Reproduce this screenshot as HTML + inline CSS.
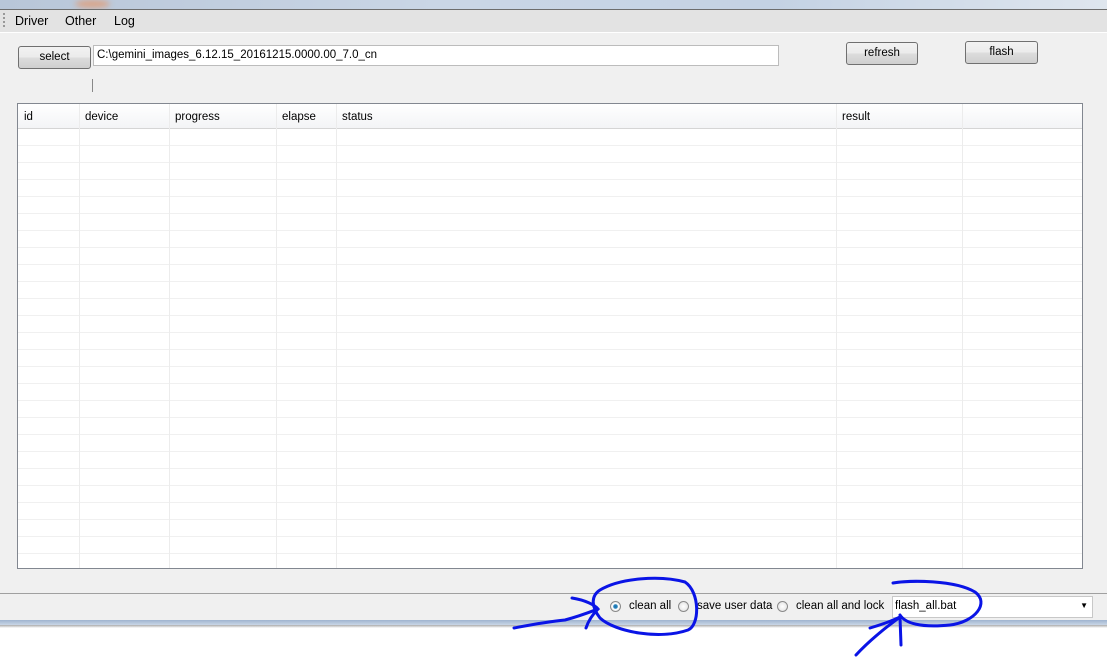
<!DOCTYPE html>
<html><head><style>
body{margin:0;width:1107px;height:658px;overflow:hidden;background:#fff;font-family:"Liberation Sans",sans-serif;font-size:11.5px;color:#000;position:relative}
.a{position:absolute}
.btn{position:absolute;border:1px solid #707070;border-radius:3px;background:linear-gradient(#f2f2f2 0%,#ebebeb 50%,#dddddd 51%,#cfcfcf 100%);text-align:center;line-height:21px;font-size:11.5px;box-sizing:border-box}
.rad{position:absolute;width:11px;height:11px;border-radius:50%;border:1px solid #8a8a8a;background:radial-gradient(#fff,#ddd);box-sizing:border-box}
</style></head><body>
<div class="a" style="left:0;top:0;width:1107px;height:9px;background:linear-gradient(90deg,#b8c6d8,#cad6e6 40%,#c4d2e4 70%,#dfe6ee)"></div>
<div class="a" style="left:75px;top:0;width:35px;height:8px;background:#d9a58a;border-radius:50%;filter:blur(3px)"></div>
<div class="a" style="left:0;top:9px;width:1107px;height:1px;background:#6d6d6d"></div>
<div class="a" style="left:0;top:10px;width:1107px;height:22px;background:#e3e3e3"></div>
<div class="a" style="left:0;top:32px;width:1107px;height:561px;background:#f0f0f0;border-top:1px solid #fff"></div>
<div class="a" style="left:3px;top:13px;width:2px;height:14px;border-left:2px dotted #999"></div>
<div class="a" style="left:15px;top:14px;font-size:12.5px">Driver</div>
<div class="a" style="left:65px;top:14px;font-size:12.5px">Other</div>
<div class="a" style="left:114px;top:14px;font-size:12.5px">Log</div>
<div class="btn" style="left:18px;top:46px;width:73px;height:23px">select</div>
<div class="a" style="left:93px;top:45px;width:686px;height:21px;background:#fff;border:1px solid #bcbcbc;box-sizing:border-box;padding:3px 3px;font-size:11.5px;line-height:13px">C:\gemini_images_6.12.15_20161215.0000.00_7.0_cn</div>
<div class="a" style="left:92px;top:79px;width:1px;height:13px;background:#888"></div>
<div class="btn" style="left:846px;top:42px;width:72px;height:23px">refresh</div>
<div class="btn" style="left:965px;top:41px;width:73px;height:23px">flash</div>
<div class="a" style="left:17px;top:103px;width:1066px;height:466px;background:#fff;border:1px solid #828790;box-sizing:border-box;overflow:hidden">
<div class="a" style="left:0;top:0;width:1064px;height:24px;background:linear-gradient(#fff,#f3f4f6);border-bottom:1px solid #d5d5d5"></div>
<div class="a" style="left:0;top:25px;width:1064px;height:440px;background:repeating-linear-gradient(#fff 0,#fff 16px,#f0f0f0 16px,#f0f0f0 17px)"></div>
<div class="a" style="left:61px;top:0;width:1px;height:465px;background:#ececec"></div>
<div class="a" style="left:151px;top:0;width:1px;height:465px;background:#ececec"></div>
<div class="a" style="left:258px;top:0;width:1px;height:465px;background:#ececec"></div>
<div class="a" style="left:318px;top:0;width:1px;height:465px;background:#ececec"></div>
<div class="a" style="left:818px;top:0;width:1px;height:465px;background:#ececec"></div>
<div class="a" style="left:944px;top:0;width:1px;height:465px;background:#ececec"></div>
<div class="a" style="left:6px;top:7px">id</div>
<div class="a" style="left:67px;top:7px">device</div>
<div class="a" style="left:157px;top:7px">progress</div>
<div class="a" style="left:264px;top:7px">elapse</div>
<div class="a" style="left:324px;top:7px">status</div>
<div class="a" style="left:824px;top:7px">result</div>
</div>
<div class="a" style="left:0;top:593px;width:1107px;height:1px;background:#a0a0a0"></div>
<div class="a" style="left:0;top:594px;width:1107px;height:26px;background:#f0f0f0"></div>
<div class="a" style="left:0;top:620px;width:1107px;height:5px;background:linear-gradient(#9fb4cf,#c9d6e6)"></div>
<div class="a" style="left:0;top:625px;width:1107px;height:3px;background:linear-gradient(#aaa,#fff)"></div>
<div class="rad" style="left:610px;top:601px;background:radial-gradient(#1d6fa8 0,#2a86c0 30%,#fff 42%,#ddd)"></div>
<div class="a" style="left:629px;top:600px">clean all</div>
<div class="rad" style="left:678px;top:601px"></div>
<div class="a" style="left:697px;top:600px">save user data</div>
<div class="rad" style="left:777px;top:601px"></div>
<div class="a" style="left:796px;top:600px">clean all and lock</div>
<div class="a" style="left:892px;top:596px;width:201px;height:22px;background:#fff;border:1px solid #c8c8c8;box-sizing:border-box;padding:3px 2px;font-size:11.5px">flash_all.bat<span style="position:absolute;right:4px;top:4px;font-size:8px">▼</span></div>
<svg class="a" style="left:0;top:0" width="1107" height="658"><g fill="none" stroke="#0a14e6" stroke-width="3" stroke-linecap="round">
<path d="M600 590 C620 578 660 575 685 582 C700 592 700 625 688 630 C660 640 615 632 600 618 C590 605 592 595 600 590"/>
<path d="M514 628 C530 625 545 622 565 620 C580 616 590 612 598 609"/>
<path d="M572 598 C585 600 595 605 598 609 C592 615 588 622 586 628"/>
<path d="M893 583 C910 580 955 580 975 592 C990 603 975 622 950 625 C920 628 905 623 900 615"/>
<path d="M856 655 C868 642 885 628 900 617"/>
<path d="M870 628 C880 625 890 622 900 617 L901 645"/>
</g></svg>
</body></html>
